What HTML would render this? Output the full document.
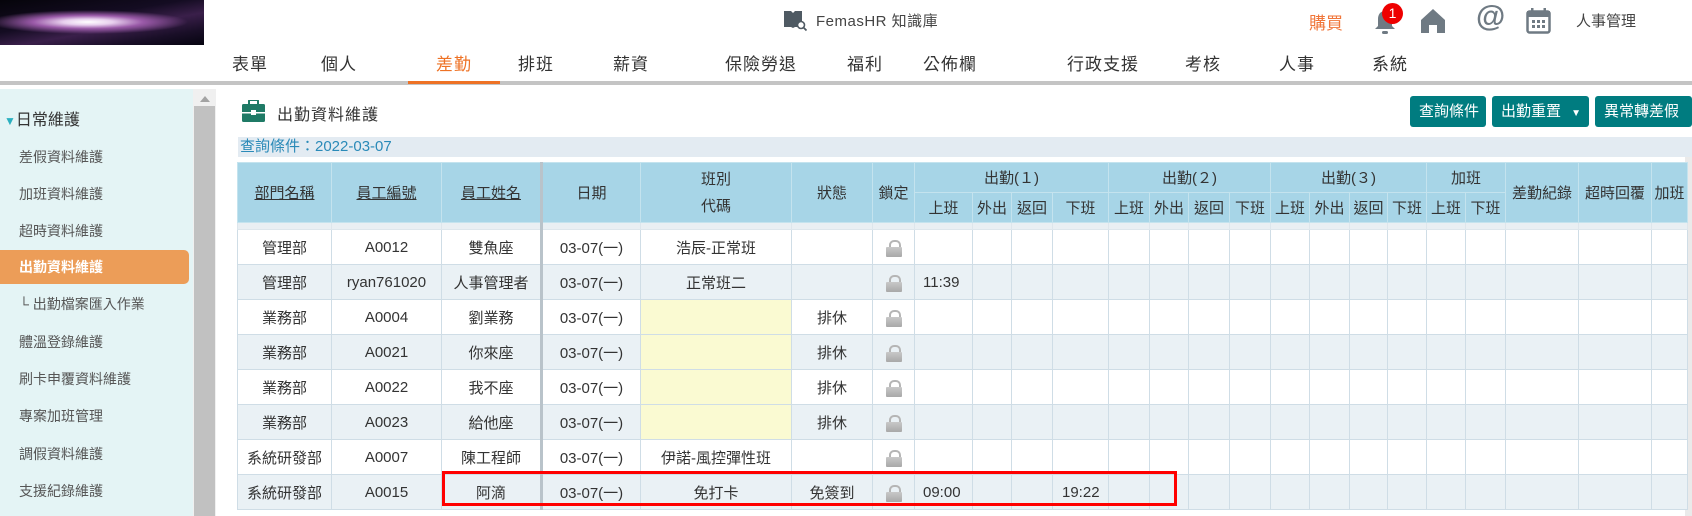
<!DOCTYPE html>
<html><head><meta charset="utf-8">
<style>
*{margin:0;padding:0;box-sizing:border-box}
body{width:1692px;height:516px;overflow:hidden;background:#fff;font-family:"Liberation Sans","Noto Sans CJK TC",sans-serif;color:#333;position:relative}
.abs{position:absolute}
.galaxy{left:0;top:0;width:204px;height:45px;background:radial-gradient(ellipse 100px 12px at 88px 22px,#fff 0%,#e8d0ee 25%,#9a5aa8 55%,rgba(60,20,80,0) 100%),linear-gradient(170deg,#05040a 0%,#140c22 40%,#3a1f4a 60%,#1a0f28 80%,#060410 100%)}
.nav span{position:absolute;top:50px;font-size:17px;color:#333;letter-spacing:1px;transform:translateX(-50%)}
.side{left:0;top:89px;width:193px;height:427px;background:#e4f4f5}
.side div{position:absolute;left:19px;font-size:14px;color:#555}
.sb{left:193px;top:89px;width:23px;height:427px;background:#f0f0f0}
.btn{position:absolute;top:96px;height:31px;background:#007c80;color:#fff;font-size:15px;border-radius:3px;line-height:31px;padding-left:9px}
table{position:absolute;left:237px;top:162px;border-collapse:collapse;table-layout:fixed;width:1448px}
td,th{border:1px solid #cfdde6;text-align:center;font-size:15px;font-weight:normal;white-space:nowrap;overflow:hidden}
th{background:#a7d5e7;color:#333;border-color:#c4e3ee}
th u{text-decoration:underline}
tr.h1 th{height:30px}tr.h2 th{height:30px}
tr.strip td{height:7px;background:#e9eff3;border-color:#dde6ec}
tr.r td{height:35px;background:#fff}
tr.e td{background:#eaf1f5}
.thick{border-left:3px solid #b9c3ca!important}
.y{background:#fafad2!important}
.lk{display:inline-block;width:16px;height:16px;position:relative;vertical-align:middle}
.lk:before{content:"";position:absolute;left:3px;top:0;width:8px;height:9px;border:2px solid #b5b5b5;border-bottom:none;border-radius:5px 5px 0 0}
.lk:after{content:"";position:absolute;left:0;top:7px;width:16px;height:10px;background:linear-gradient(#c8c8c8,#a8a8a8);border-radius:1px}
</style></head><body>
<div class="abs galaxy"></div>
<svg class="abs" style="left:783px;top:10px" width="24" height="22" viewBox="0 0 24 22"><path d="M1 1h7l2 2v15l-2-1H1z M19 1h-7l-2 2v15l2-1h7z" fill="#4f5a63"/><circle cx="18" cy="15" r="3.5" fill="#fff" stroke="#4f5a63" stroke-width="1.6"/><path d="M20.5 17.5l3 3" stroke="#4f5a63" stroke-width="1.8"/></svg>
<div class="abs" style="left:816px;top:10px;font-size:15px;color:#444;letter-spacing:.5px">FemasHR 知識庫</div>
<div class="abs" style="left:1309px;top:9px;font-size:17px;color:#f0763a">購買</div>
<svg class="abs" style="left:1372px;top:8px" width="26" height="28" viewBox="0 0 26 28"><path d="M13 3c-5 0-7 4-7 8v7l-3 3h20l-3-3v-7c0-4-2-8-7-8z" fill="#6f7a83"/><rect x="10" y="23" width="6" height="3" rx="1.5" fill="#6f7a83"/></svg>
<div class="abs" style="left:1382px;top:3px;width:21px;height:21px;border-radius:50%;background:#e00;color:#fff;font-size:14px;text-align:center;line-height:21px">1</div>
<svg class="abs" style="left:1420px;top:8px" width="26" height="26" viewBox="0 0 26 26"><path d="M13 1L1 12v13h8v-8h8v8h8V12z" fill="#6f7a83"/></svg>
<div class="abs" style="left:1476px;top:0px;font-size:30px;font-weight:bold;color:#6f7a83">@</div>
<svg class="abs" style="left:1526px;top:7px" width="25" height="27" viewBox="0 0 25 27"><rect x="1.5" y="4.5" width="22" height="21" rx="2" fill="none" stroke="#6f7a83" stroke-width="2.5"/><rect x="1" y="4" width="23" height="6" fill="#6f7a83"/><rect x="5" y="1" width="2.5" height="5" fill="#6f7a83"/><rect x="17.5" y="1" width="2.5" height="5" fill="#6f7a83"/><g fill="#6f7a83"><rect x="6" y="13" width="3" height="3"/><rect x="11" y="13" width="3" height="3"/><rect x="16" y="13" width="3" height="3"/><rect x="6" y="18" width="3" height="3"/><rect x="11" y="18" width="3" height="3"/><rect x="16" y="18" width="3" height="3"/></g></svg>
<div class="abs" style="left:1576px;top:10px;font-size:15px;color:#444;white-space:nowrap">人事管理</div>
<div class="nav">
<span style="left:250px">表單</span><span style="left:339px">個人</span><span style="left:454px;color:#ee7225">差勤</span><span style="left:536px">排班</span><span style="left:631px">薪資</span><span style="left:761px">保險勞退</span><span style="left:865px">福利</span><span style="left:950px">公佈欄</span><span style="left:1103px">行政支援</span><span style="left:1203px">考核</span><span style="left:1297px">人事</span><span style="left:1390px">系統</span>
</div>
<div class="abs" style="left:0;top:81px;width:1692px;height:4px;background:#c4c4c4"></div>
<div class="abs" style="left:408px;top:81px;width:92px;height:3px;background:#ee7225"></div>
<div class="abs side">
<div style="left:4px;top:17px;font-size:16px;color:#333"><span style="color:#2bb0c0;font-size:12px">▼</span>日常維護</div>
<div style="top:58px">差假資料維護</div>
<div style="top:95px">加班資料維護</div>
<div style="top:132px">超時資料維護</div>
<div style="left:0;top:161px;width:189px;height:34px;background:#ec9d58;border-radius:0 5px 5px 0"></div>
<div style="top:168px;color:#fff;font-weight:bold">出勤資料維護</div>
<div style="top:205px">└ 出勤檔案匯入作業</div>
<div style="top:243px">體溫登錄維護</div>
<div style="top:280px">刷卡申覆資料維護</div>
<div style="top:317px">專案加班管理</div>
<div style="top:355px">調假資料維護</div>
<div style="top:392px">支援紀錄維護</div>
</div>
<div class="abs sb"><div style="position:absolute;left:7px;top:7px;border:5px solid transparent;border-bottom:6px solid #a3a3a3;border-top:none;width:0"></div><div style="position:absolute;left:1px;top:17px;width:21px;height:410px;background:#c1c1c1"></div></div>
<svg class="abs" style="left:242px;top:100px" width="23" height="22" viewBox="0 0 23 22"><rect x="7" y="0" width="9" height="5" rx="1" fill="none" stroke="#1f7a66" stroke-width="2"/><rect x="0" y="4" width="23" height="18" rx="1.5" fill="#1f7a66"/><rect x="0" y="12" width="23" height="1.5" fill="#fff"/><rect x="9" y="10" width="5" height="5" fill="#fff"/></svg>
<div class="abs" style="left:277px;top:101px;font-size:16px;color:#333;letter-spacing:1px">出勤資料維護</div>
<div class="btn" style="left:1410px;width:76px">查詢條件</div>
<div class="btn" style="left:1492px;width:97px">出勤重置 <span style="font-size:10px;margin-left:6px">▼</span></div>
<div class="btn" style="left:1595px;width:97px">異常轉差假</div>
<div class="abs" style="left:238px;top:137px;width:1454px;height:20px;background:#e3ebf2;font-size:15px;color:#2a8ab8;line-height:20px;padding-left:2px">查詢條件：2022-03-07</div>
<div class="abs" style="left:1685px;top:157px;width:7px;height:359px;background:#eaeaea"></div>
<table>
<colgroup><col style="width:94px"><col style="width:110px"><col style="width:100px"><col style="width:99px"><col style="width:151px"><col style="width:81px"><col style="width:42px"><col style="width:58px"><col style="width:39px"><col style="width:41px"><col style="width:56px"><col style="width:41px"><col style="width:39px"><col style="width:41px"><col style="width:41px"><col style="width:39px"><col style="width:40px"><col style="width:38px"><col style="width:39px"><col style="width:39px"><col style="width:40px"><col style="width:73px"><col style="width:73px"><col style="width:36px"></colgroup>
<tr class="h1"><th rowspan="2"><u>部門名稱</u></th><th rowspan="2"><u>員工編號</u></th><th rowspan="2"><u>員工姓名</u></th><th rowspan="2" class="thick">日期</th><th rowspan="2" style="line-height:27px">班別<br>代碼</th><th rowspan="2">狀態</th><th rowspan="2">鎖定</th><th colspan="4">出勤(１)</th><th colspan="4">出勤(２)</th><th colspan="4">出勤(３)</th><th colspan="2">加班</th><th rowspan="2">差勤紀錄</th><th rowspan="2">超時回覆</th><th rowspan="2">加班</th></tr>
<tr class="h2"><th>上班</th><th>外出</th><th>返回</th><th>下班</th><th>上班</th><th>外出</th><th>返回</th><th>下班</th><th>上班</th><th>外出</th><th>返回</th><th>下班</th><th>上班</th><th>下班</th></tr>
<tr class="strip"><td></td><td></td><td></td><td class="thick"></td><td></td><td></td><td></td><td></td><td></td><td></td><td></td><td></td><td></td><td></td><td></td><td></td><td></td><td></td><td></td><td></td><td></td><td></td><td></td><td></td></tr>
<tr class="r"><td>管理部</td><td>A0012</td><td>雙魚座</td><td class="thick">03-07(一)</td><td>浩辰-正常班</td><td></td><td><i class="lk"></i></td><td></td><td></td><td></td><td></td><td></td><td></td><td></td><td></td><td></td><td></td><td></td><td></td><td></td><td></td><td></td><td></td><td></td></tr>
<tr class="r e"><td>管理部</td><td>ryan761020</td><td>人事管理者</td><td class="thick">03-07(一)</td><td>正常班二</td><td></td><td><i class="lk"></i></td><td style="text-align:left;padding-left:8px">11:39</td><td></td><td></td><td></td><td></td><td></td><td></td><td></td><td></td><td></td><td></td><td></td><td></td><td></td><td></td><td></td><td></td></tr>
<tr class="r"><td>業務部</td><td>A0004</td><td>劉業務</td><td class="thick">03-07(一)</td><td class="y"></td><td>排休</td><td><i class="lk"></i></td><td></td><td></td><td></td><td></td><td></td><td></td><td></td><td></td><td></td><td></td><td></td><td></td><td></td><td></td><td></td><td></td><td></td></tr>
<tr class="r e"><td>業務部</td><td>A0021</td><td>你來座</td><td class="thick">03-07(一)</td><td class="y"></td><td>排休</td><td><i class="lk"></i></td><td></td><td></td><td></td><td></td><td></td><td></td><td></td><td></td><td></td><td></td><td></td><td></td><td></td><td></td><td></td><td></td><td></td></tr>
<tr class="r"><td>業務部</td><td>A0022</td><td>我不座</td><td class="thick">03-07(一)</td><td class="y"></td><td>排休</td><td><i class="lk"></i></td><td></td><td></td><td></td><td></td><td></td><td></td><td></td><td></td><td></td><td></td><td></td><td></td><td></td><td></td><td></td><td></td><td></td></tr>
<tr class="r e"><td>業務部</td><td>A0023</td><td>給他座</td><td class="thick">03-07(一)</td><td class="y"></td><td>排休</td><td><i class="lk"></i></td><td></td><td></td><td></td><td></td><td></td><td></td><td></td><td></td><td></td><td></td><td></td><td></td><td></td><td></td><td></td><td></td><td></td></tr>
<tr class="r"><td>系統研發部</td><td>A0007</td><td>陳工程師</td><td class="thick">03-07(一)</td><td>伊諾-風控彈性班</td><td></td><td><i class="lk"></i></td><td></td><td></td><td></td><td></td><td></td><td></td><td></td><td></td><td></td><td></td><td></td><td></td><td></td><td></td><td></td><td></td><td></td></tr>
<tr class="r e"><td>系統研發部</td><td>A0015</td><td>阿滴</td><td class="thick">03-07(一)</td><td>免打卡</td><td>免簽到</td><td><i class="lk"></i></td><td style="text-align:left;padding-left:8px">09:00</td><td></td><td></td><td style="text-align:left;padding-left:9px">19:22</td><td></td><td></td><td></td><td></td><td></td><td></td><td></td><td></td><td></td><td></td><td></td><td></td><td></td></tr>
</table>
<div class="abs" style="left:442px;top:471px;width:735px;height:35px;border:3px solid #f00"></div>
</body></html>
